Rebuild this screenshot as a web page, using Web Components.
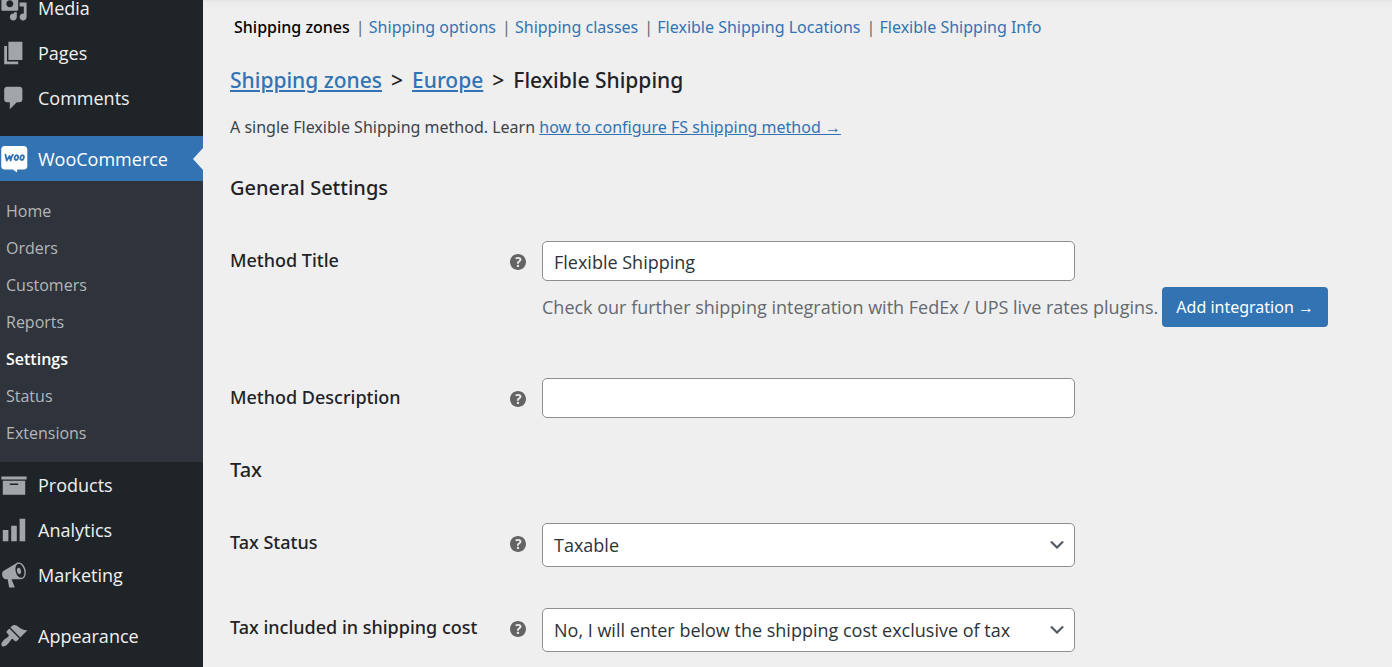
<!DOCTYPE html>
<html lang="en">
<head>
<meta charset="utf-8">
<title>Flexible Shipping – WooCommerce settings</title>
<style>
  html, body { margin: 0; }
  body {
    --blue: #3273b4;
    --ink: #1f2327;
    --page: #efefef;
    --sm: 16px;
    --lg: 18px;
    --body: "Open Sans", "Noto Sans", sans-serif;
    --display: "Noto Sans", "Open Sans", sans-serif;
    background: var(--page);
    color: var(--ink);
    font-family: var(--display);
    font-size: var(--lg);
    height: 100vh;
    overflow: hidden;
  }
</style>
</head>
<body>
<admin-shell>
  <admin-menu slot="menu">
    <menu-item icon="media">Media</menu-item>
    <menu-item icon="pages">Pages</menu-item>
    <menu-item icon="comments">Comments</menu-item>
    <menu-item icon="woo" current group>WooCommerce</menu-item>
    <sub-menu>
      <sub-item>Home</sub-item>
      <sub-item>Orders</sub-item>
      <sub-item>Customers</sub-item>
      <sub-item>Reports</sub-item>
      <sub-item current>Settings</sub-item>
      <sub-item>Status</sub-item>
      <sub-item>Extensions</sub-item>
    </sub-menu>
    <menu-item icon="products">Products</menu-item>
    <menu-item icon="analytics">Analytics</menu-item>
    <menu-item icon="marketing">Marketing</menu-item>
    <menu-item icon="appearance" group>Appearance</menu-item>
  </admin-menu>

  <section-tabs>
    <section-tab current>Shipping zones</section-tab>
    <section-tab>Shipping options</section-tab>
    <section-tab>Shipping classes</section-tab>
    <section-tab>Flexible Shipping Locations</section-tab>
    <section-tab>Flexible Shipping Info</section-tab>
  </section-tabs>
  <page-heading></page-heading>
  <settings-section heading="General Settings">
    <setting-field label="Method Title" kind="text" value="Flexible Shipping">
      <integration-note></integration-note>
    </setting-field>
    <setting-field label="Method Description" kind="text"></setting-field>
  </settings-section>
  <settings-section heading="Tax" compact>
    <setting-field label="Tax Status" kind="select" options="Taxable|None"></setting-field>
    <setting-field label="Tax included in shipping cost" kind="select"
      options="No, I will enter below the shipping cost exclusive of tax|Yes, I will enter below the shipping cost inclusive of tax"></setting-field>
  </settings-section>
</admin-shell>

<script>
const ICONS = {
  media: '<path d="M13 11V4c0-.55-.45-1-1-1h-1.67L9 1H5L3.67 3H2c-.55 0-1 .45-1 1v7c0 .55.45 1 1 1h10c.55 0 1-.45 1-1zM7 4.5c1.38 0 2.5 1.12 2.5 2.5S8.38 9.5 7 9.5 4.5 8.38 4.5 7 5.62 4.5 7 4.5zM14 6h5v10.5c0 1.38-1.12 2.5-2.5 2.5S14 17.88 14 16.5s1.12-2.5 2.5-2.5c.17 0 .34.02.5.05V9h-3V6zm-4 8.05V13h2v3.5c0 1.38-1.12 2.5-2.5 2.5S7 17.88 7 16.5 8.12 14 9.5 14c.17 0 .34.02.5.05z"/>',
  pages: '<path d="M6 15V2h10v13H6zm-1 1h8v2H3V5h2v11z"/>',
  comments: '<path d="M5 2h9c1.1 0 2 .9 2 2v7c0 1.1-.9 2-2 2h-2l-5 5v-5H5c-1.1 0-2-.9-2-2V4c0-1.1.9-2 2-2z"/>',
  woo: '<path fill="#fff" d="M3.2.7h13.800c1.400 0 2.500 1 2.500 2.400v12c0 1.400-1.100 2.400-2.500 2.400h-4.800v2.100l-3-2.100H3.200C1.900 17.500.9 16.500.9 15.100V3.100C.9 1.700 1.900.7 3.200.7z"/><path fill="none" stroke="#3273b4" stroke-width="1.300" stroke-linecap="round" stroke-linejoin="round" d="M3.900 6.900l.9 4.200 2-3.300.8 3.300c.3-1.800.8-3.200 1.600-4.200"/><g fill="none" stroke="#3273b4" stroke-width="1.300"><ellipse cx="11.700" cy="9" rx="1.200" ry="1.700" transform="rotate(16 11.700 9)"/><ellipse cx="15.800" cy="9" rx="1.200" ry="1.700" transform="rotate(16 15.800 9)"/></g>',
  products: '<path d="M19 4v2H1V4h18zM2 7h16v10H2V7zm11 3V9H7v1h6z"/>',
  analytics: '<path d="M18 18V2h-4v16h4zm-6 0V7H8v11h4zm-6 0v-8H2v8h4z"/>',
  marketing: '<path d="M18.150 5.940c.46 1.620.38 3.220-.02 4.480-.42 1.280-1.260 2.180-2.300 2.480-.16.06-.26.06-.4.06-.06.02-.12.02-.18.02-.06.02-.14.02-.22.02h-6.800l2.220 5.500c.02.14-.06.26-.14.34-.08.1-.24.16-.34.16H6.950c-.1 0-.26-.06-.34-.16-.08-.08-.16-.2-.14-.34l-1-5.500H4.250l-.02-.02c-.5.06-1.080-.18-1.540-.62s-.88-1.080-1.060-1.880c-.24-.8-.2-1.560-.02-2.200.18-.62.58-1.080 1.060-1.300l.02-.02 9-5.400c.1-.06.18-.1.24-.16.06-.04.14-.08.24-.12.16-.08.28-.12.5-.18 1.040-.3 2.240.1 3.220.98s1.840 2.240 2.260 3.860zm-2.580 5.980h-.02c.4-.1.74-.34 1.040-.7.58-.7.86-1.760.86-3.040 0-.64-.1-1.300-.28-1.980-.34-1.360-1.020-2.500-1.780-3.240s-1.680-1.100-2.460-.88c-.82.22-1.400.96-1.700 2-.32 1.040-.28 2.360.06 3.720.38 1.360 1 2.500 1.800 3.240.78.74 1.620 1.100 2.480.88zm-2.540-7.080c.22-.04.42-.02.62.04.38.16.76.48 1.020 1s.42 1.200.42 1.780c0 .3-.04.56-.12.8-.18.48-.44.84-.86.94-.34.1-.8-.06-1.140-.4s-.64-.86-.78-1.500c-.18-.62-.12-1.240.02-1.720s.48-.84.82-.94z"/>',
  appearance: '<path d="M14.480 11.060L7.410 3.990l1.500-1.500c.5-.56 2.300-.47 3.510.32 1.210.8 1.430 1.280 2.910 2.100 1.180.64 2.450 1.260 4.450.85zm-.71.71L6.700 4.700 4.930 6.470c-.39.39-.39 1.020 0 1.410l1.060 1.060c.39.39.39 1.030 0 1.420-.6.6-1.430 1.110-2.210 1.690-.35.26-.7.53-1.010.84C1.430 14.230.4 16.080 1.400 17.070c.99 1 2.840-.03 4.180-1.360.31-.31.58-.66.85-1.020.57-.78 1.080-1.610 1.690-2.210.39-.39 1.020-.39 1.410 0l1.060 1.060c.39.39 1.020.39 1.410 0z"/>',
  help: '<path d="M17 10c0-3.870-3.140-7-7-7-3.870 0-7 3.130-7 7s3.130 7 7 7c3.860 0 7-3.130 7-7zm-6.300 1.480H9.140v-.43c0-.38.08-.7.24-.98s.46-.57.88-.89c.41-.29.68-.53.81-.71.14-.18.2-.39.2-.62 0-.25-.09-.44-.28-.58-.19-.13-.45-.19-.79-.19-.58 0-1.250.19-2 .57l-.64-1.280c.87-.49 1.800-.74 2.770-.74.81 0 1.450.2 1.920.58.48.39.71.91.71 1.550 0 .43-.09.8-.29 1.110-.19.32-.57.67-1.110 1.060-.38.28-.61.49-.71.63-.1.150-.150.34-.150.57v.35zm-1.470 2.740c-.18-.17-.27-.42-.27-.73 0-.33.08-.58.26-.75s.43-.25.77-.25c.32 0 .57.09.75.26s.27.42.27.74c0 .3-.09.55-.27.72-.18.18-.43.27-.75.27-.33 0-.58-.09-.76-.26z"/>'
};

function element(name, render) {
  customElements.define(name, class extends HTMLElement {
    constructor() {
      super();
      this.attachShadow({ mode: 'open' });
    }
    connectedCallback() {
      this.shadowRoot.innerHTML = render(this);
    }
  });
}

element('admin-shell', () => `
  <style>
    :host { display: grid; grid-template-columns: 203px minmax(0, 1fr); height: 100%; }
    aside { background: #1f2428; overflow: hidden; }
    main {
      padding: 15px 27px 0;
      overflow: hidden;
      background: linear-gradient(#e2e2e4, #ebebec 2px, #efefef 10px) no-repeat 0 0 / 100% 10px;
    }
  </style>
  <aside><slot name="menu"></slot></aside>
  <main><slot></slot></main>`);

/* The menu is scrolled so that the first entry is partly out of view. */
element('admin-menu', () => `
  <style>
    :host { display: block; font-family: var(--body); }
    nav { display: flex; flex-direction: column; margin-top: -15px; }
  </style>
  <nav aria-label="Main menu"><slot></slot></nav>`);

element('menu-item', (el) => `
  <style>
    :host { display: block; position: relative; }
    :host([group]) { margin-top: 16px; }
    a {
      display: flex; align-items: center; gap: 10px; height: 45px;
      color: #f0f0f1; font-size: var(--lg); line-height: 16px; text-decoration: none;
    }
    svg { width: 28px; height: 28px; fill: #a1a6ab; }
    :host([current]) a { background: var(--blue); color: #fff; }
    :host([current])::after {
      content: ""; position: absolute; right: 0; top: 12px;
      border: 11px solid transparent; border-left: 0; border-right: 10px solid var(--page);
    }
  </style>
  <a href="#"><svg viewBox="0 0 20 20" aria-hidden="true">${ICONS[el.getAttribute('icon')]}</svg><span><slot></slot></span></a>`);

element('sub-menu', () => `
  <style>
    :host { display: block; background: #2f333b; padding: 11px 0; }
  </style>
  <slot></slot>`);

element('sub-item', () => `
  <style>
    :host { display: block; }
    a {
      display: flex; align-items: center; height: 37px; padding-left: 6px;
      color: #b4b7ba; font-size: var(--sm); text-decoration: none;
    }
    :host([current]) a { color: #fff; font-weight: 600; }
  </style>
  <a href="#"><slot></slot></a>`);

element('section-tabs', () => `
  <style>
    :host { display: block; }
    nav { display: flex; gap: 6px; padding-left: 4px; line-height: 24px; font-size: var(--sm); white-space: nowrap; }
  </style>
  <nav aria-label="Shipping sections"><slot></slot></nav>`);

element('section-tab', () => `
  <style>
    :host { display: block; color: #646970; }
    :host(:not(:first-child))::before { content: "|"; }
    a { color: var(--blue); text-decoration: none; }
    :host([current]) a { color: #000; font-weight: 500; }
  </style>
  <a href="#"><slot></slot></a>`);

element('page-heading', () => `
  <style>
    :host { display: block; }
    a { color: var(--blue); }
    h1 { display: flex; gap: 9px; margin: 25px 0 0; font-size: 21px; font-weight: 500; line-height: 32px; }
    p { margin: 19px 0 0; font-size: var(--sm); line-height: 24px; color: #3c434a; }
  </style>
  <h1><a href="#">Shipping zones</a> <span>&gt;</span> <a href="#">Europe</a> <span>&gt;</span> <span>Flexible Shipping</span></h1>
  <p>A single Flexible Shipping method. Learn <a href="#">how to configure FS shipping method →</a></p>`);

element('settings-section', (el) => `
  <style>
    :host { display: block; padding-top: 37px; }
    :host([compact]) { padding-top: 40px; }
    h2 { margin: 0 0 41px; font-size: 20px; font-weight: 500; line-height: 24px; }
    div { display: flex; flex-direction: column; gap: 51px; }
    :host([compact]) div { gap: 41px; }
  </style>
  <section><h2>${el.getAttribute('heading')}</h2><div><slot></slot></div></section>`);

element('setting-field', (el) => {
  const control = el.getAttribute('kind') === 'select'
    ? `<div class="pick"><select id="control">${el.getAttribute('options').split('|').map(o => `<option>${o}</option>`).join('')}</select>
       <svg class="chevron" viewBox="0 0 20 20" aria-hidden="true"><path d="M5 6l5 5 5-5 2 1-7 7-7-7 2-1z"/></svg></div>`
    : `<input id="control" type="text" value="${el.getAttribute('value') || ''}">`;
  return `
  <style>
    :host { display: grid; grid-template-columns: 280px 32px minmax(0, 1fr); }
    label { font-size: var(--lg); font-weight: 500; line-height: 24px; padding-top: 7px; }
    .help { width: 16px; height: 16px; margin-top: 13px; fill: #646464; }
    input, select {
      display: block; box-sizing: border-box; width: 100%; max-width: 533px; margin: 0;
      border: 1px solid #8c8f94; border-radius: 5px; background: #fff;
      color: #2c3338; font-family: var(--body); font-size: var(--lg);
    }
    input { height: 40px; padding: 1px 11px 0; }
    select { height: 44px; padding: 0 40px 0 11px; appearance: none; }
    .pick { display: grid; max-width: 533px; align-items: center; }
    .pick > * { grid-area: 1 / 1; }
    .chevron { width: 20px; height: 20px; margin-right: 8px; justify-self: end; fill: #50575e; pointer-events: none; }
  </style>
  <label for="control">${el.getAttribute('label')}</label>
  <svg class="help" viewBox="3 3 14 14" aria-hidden="true">${ICONS.help}</svg>
  <div>${control}<slot></slot></div>`;
});

element('integration-note', () => `
  <style>
    :host { display: flex; align-items: center; gap: 4px; margin-top: 6px; color: #646970; white-space: nowrap; }
    span { font-family: var(--body); }
    button {
      height: 40px; padding: 0 14px; border: 0; border-radius: 4px;
      background: var(--blue); color: #fff; font-family: inherit; font-size: var(--sm);
    }
  </style>
  <span>Check our further shipping integration with FedEx / UPS live rates plugins.</span>
  <button type="button">Add integration →</button>`);
</script>
</body>
</html>
